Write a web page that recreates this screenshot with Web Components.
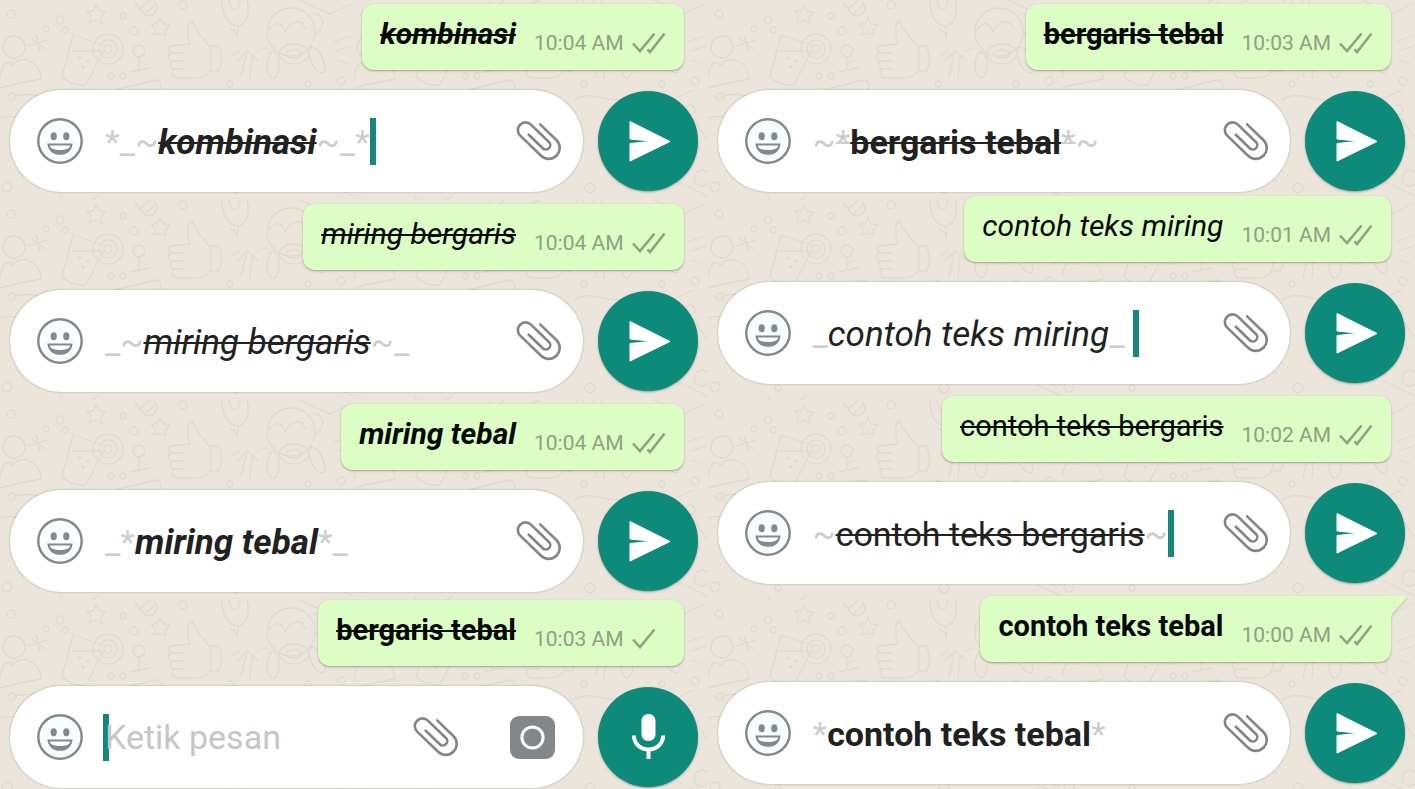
<!DOCTYPE html>
<html lang="id">
<head>
  <meta charset="utf-8">
  <meta name="viewport" content="width=device-width, initial-scale=1">
  <title>Format teks</title>
  <style>
    body {
      margin: 0;
      min-height: 100vh;
      background: #ece5db;
      font-family: Roboto, "Liberation Sans", sans-serif;
    }
  </style>
</head>
<body>
  <chat-board>
    <chat-column>
      <chat-step>
        <chat-bubble text="*_~kombinasi~_*" time="10:04 AM" status="delivered"></chat-bubble>
        <chat-composer value="*_~kombinasi~_*" caret></chat-composer>
      </chat-step>
      <chat-step>
        <chat-bubble text="_~miring bergaris~_" time="10:04 AM" status="delivered"></chat-bubble>
        <chat-composer value="_~miring bergaris~_"></chat-composer>
      </chat-step>
      <chat-step>
        <chat-bubble text="_*miring tebal*_" time="10:04 AM" status="delivered"></chat-bubble>
        <chat-composer value="_*miring tebal*_"></chat-composer>
      </chat-step>
      <chat-step gap="small">
        <chat-bubble text="~*bergaris tebal*~" time="10:03 AM" status="sent"></chat-bubble>
        <chat-composer placeholder="Ketik pesan"></chat-composer>
      </chat-step>
    </chat-column>
    <chat-column>
      <chat-step>
        <chat-bubble text="~*bergaris tebal*~" time="10:03 AM" status="delivered"></chat-bubble>
        <chat-composer value="~*bergaris tebal*~"></chat-composer>
      </chat-step>
      <chat-step gap="tiny">
        <chat-bubble text="_contoh teks miring_" time="10:01 AM" status="delivered"></chat-bubble>
        <chat-composer value="_contoh teks miring_ " caret></chat-composer>
      </chat-step>
      <chat-step>
        <chat-bubble text="~contoh teks bergaris~" time="10:02 AM" status="delivered"></chat-bubble>
        <chat-composer value="~contoh teks bergaris~" caret></chat-composer>
      </chat-step>
      <chat-step>
        <chat-bubble text="*contoh teks tebal*" time="10:00 AM" status="delivered" tail></chat-bubble>
        <chat-composer value="*contoh teks tebal*"></chat-composer>
      </chat-step>
    </chat-column>
  </chat-board>

  <script>
    const ICONS = {
      smile: `
        <svg width="46" height="46" viewBox="-23 -23 46 46" aria-hidden="true">
          <circle r="21.7" fill="#f8fdfe" stroke="#82898c" stroke-width="2.4"/>
          <ellipse cx="-6.3" cy="-4.7" rx="3.1" ry="4" fill="#82898c"/>
          <ellipse cx="6.3" cy="-4.7" rx="3.1" ry="4" fill="#82898c"/>
          <path d="M-12.6 2.4H12.6C12.2 9.6 6.6 13.8 0 13.8S-12.2 9.6-12.6 2.4Z" fill="#82898c"/>
          <path d="M-10.2 4.4H10.2C9.6 8 5 8.9 0 8.9S-9.6 8-10.2 4.4Z" fill="#fff"/>
        </svg>`,
      clip: `
        <svg width="46" height="42" viewBox="0 0 46 42" aria-hidden="true">
          <path transform="translate(23 21) rotate(44)" fill="none" stroke="#82868a" stroke-width="2.6" stroke-linecap="round"
            d="M-10 -13.5H12.5A11 11 0 0 1 12.5 8.5H-16.5A7.7 7.7 0 0 1 -16.5 -6.9H8.5A4.4 4.4 0 0 1 8.5 1.9H-11"/>
        </svg>`,
      camera: `
        <svg width="45" height="43" viewBox="0 0 45 43" aria-hidden="true">
          <rect width="45" height="43" rx="9" fill="#82878b"/>
          <circle cx="22.5" cy="21.5" r="10.6" fill="none" stroke="#fff" stroke-width="3"/>
        </svg>`,
      send: `
        <svg width="48" height="48" viewBox="0 0 48 48" aria-hidden="true">
          <path fill="#fff" stroke="#fff" stroke-linejoin="round" d="M6 4.5L46 24.5L6 44V26.5L28 24.3L6 22Z"/>
        </svg>`,
      mic: `
        <svg width="48" height="48" viewBox="0 0 48 48" aria-hidden="true">
          <rect x="17.5" y="1" width="14" height="27" rx="6.5" fill="#fff"/>
          <path d="M9.8 22.5C10.5 41 38.5 41 39.2 22.5M24.5 36V46" fill="none" stroke="#fff" stroke-width="4"/>
        </svg>`,
      delivered: `
        <svg width="34" height="22" viewBox="0 0 34 22" role="img" aria-label="Terkirim">
          <path d="M1 11.5L8 19L22.5 1.5M15.5 17.5L18 20L32.5 1.5" fill="none" stroke="#8da281" stroke-width="2.5"/>
        </svg>`,
      sent: `
        <svg width="34" height="22" viewBox="0 0 34 22" role="img" aria-label="Dikirim">
          <path d="M1 11.5L8 19L22.5 1.5" fill="none" stroke="#8da281" stroke-width="2.5"/>
        </svg>`,
    };

    const STYLES = { '*': 'bold', '_': 'italic', '~': 'strike' };

    // The italic face runs narrower than the upright one, so each host sets a larger --italic-size.
    const FORMAT_CSS = `
      .bold { font-weight: 700; }
      .italic { font-style: italic; font-size: var(--italic-size); }
      .strike { text-decoration: line-through; text-decoration-thickness: 2px; }
      .mark { color: #cdcdcd; }
    `;

    // Turns "*_text_*" into spans. Markers are kept only while the text is being edited.
    function format(source, keepMarks) {
      const value = source.trimEnd();
      const active = [];
      let open = '';
      let close = '';
      let body = value;

      while (STYLES[body[0]] && body.endsWith(body[0])) {
        const cls = active.includes('strike') ? 'mark strike' : 'mark';
        const mark = `<span class="${cls}">${body[0]}</span>`;
        open += mark;
        close = mark + close;
        active.push(STYLES[body[0]]);
        body = body.slice(1, -1);
      }

      const text = `<span class="${active.join(' ')}">${body}</span>`;
      return keepMarks ? open + text + close + source.slice(value.length) : text;
    }

    class ChatBoard extends HTMLElement {
      constructor() {
        super();
        this.attachShadow({ mode: 'open' }).innerHTML = `
          <style>
            :host {
              display: grid;
              grid-template-columns: 1fr 1fr;
              position: relative;
              isolation: isolate;
              min-height: 100vh;
              overflow: hidden;
            }
            .wallpaper {
              position: absolute;
              inset: 0;
              width: 100%;
              height: 100%;
              z-index: -1;
            }
            @media (max-width: 900px) {
              :host { grid-template-columns: 1fr; }
            }
          </style>
          <svg class="wallpaper" aria-hidden="true">
            <defs>
              <pattern id="doodles" width="354" height="200" patternUnits="userSpaceOnUse">
                <g fill="none" stroke="#e1dacf" stroke-width="1.3" stroke-linecap="round" stroke-linejoin="round">
                  <circle cx="14" cy="47" r="11"/>
                  <path d="M0 78C2 62 8 60 13 65C20 54 40 60 41 79C28 82 12 84 0 88"/>
                  <path d="M73 35L105 46M73 51H101M73 35L62 77C70 84 78 86 86 85L103 52"/>
                  <circle cx="108" cy="49" r="15"/><circle cx="108" cy="49" r="9"/><circle cx="108" cy="49" r="4"/>
                  <circle cx="80" cy="58" r="1"/><circle cx="88" cy="61" r="1"/><circle cx="83" cy="67" r="1"/>
                  <path d="M96 5L99 11L106 12L101 17L102 24L96 20L89 23L91 16L87 11L93 11Z"/>
                  <path d="M160 18L163 24L170 25L165 30L166 36L160 33L153 35L155 29L151 24L157 24Z"/>
                  <path d="M135 2L143 13C150 21 162 10 155 2M141 8L150 0M146 13L156 4"/>
                  <path d="M28 46L48 40M36 35L40 51M31 38L45 49"/>
                  <circle cx="11" cy="14" r="4"/><circle cx="60" cy="20" r="4"/><circle cx="46" cy="29" r="3"/>
                  <circle cx="65" cy="30" r="3"/><circle cx="123" cy="16" r="3"/><circle cx="134" cy="31" r="4"/>
                  <circle cx="183" cy="5" r="4"/><circle cx="111" cy="76" r="3"/><circle cx="123" cy="76" r="3"/>
                  <circle cx="139" cy="51" r="6"/><path d="M139 57V70M130 72L150 68M139 63L146 61"/>
                  <path d="M172 46C168 46 168 52 172 53M172 53C167 54 168 60 173 61M173 61C169 62 169 69 174 69M174 69C171 71 172 77 177 78H195C207 78 210 72 211 66V48C205 41 196 32 192 21C186 22 187 32 190 44L172 46M172 53H184M173 61H185M174 69H185"/>
                  <path d="M211 46H219C222 55 222 64 219 71H211"/>
                  <path d="M222 0C222 15 228 26 238 26C248 24 250 12 247 0M229 0C230 12 239 13 240 0M230 28L238 34M238 26V38"/>
                  <path d="M241 77L246 55M250 78L252 56M237 61L247 51L258 60M232 55L240 51M257 51L266 48"/>
                  <circle cx="291" cy="32" r="24"/><path d="M268 31C275 20 282 22 285 32C290 20 302 18 306 29M313 14C324 12 326 29 316 34"/>
                  <ellipse cx="294" cy="54" rx="15" ry="10"/><ellipse cx="294" cy="54" rx="8" ry="4"/>
                  <ellipse cx="273" cy="65" rx="6" ry="13"/><ellipse cx="317" cy="60" rx="6" ry="14" transform="rotate(-25 317 60)"/>
                  <path d="M334 42L350 36M336 51L352 46M338 60L348 64"/>
                  <path d="M115 90L155 80C162 80 162 88 158 92M12 98C30 86 60 108 80 98M0 118C20 112 28 124 34 132"/>
                  <circle cx="230" cy="84" r="3"/><circle cx="341" cy="81" r="4"/><circle cx="308" cy="84" r="3"/>
                  <circle cx="12" cy="97" r="4"/><circle cx="7" cy="187" r="5"/><circle cx="70" cy="188" r="3"/>
                  <path d="M220 100C240 86 260 112 284 92M300 108L340 90M320 180L353 196M60 196C66 210 84 208 98 196M306 120C330 116 340 130 346 150"/>
                  <circle cx="236" cy="188" r="5"/><circle cx="348" cy="178" r="8"/><circle cx="336" cy="110" r="5"/>
                  <path d="M340 118L352 138M300 0L330 14L350 4"/>
                </g>
              </pattern>
            </defs>
            <rect width="100%" height="100%" fill="url(#doodles)"/>
          </svg>
          <slot></slot>
        `;
      }
    }

    class ChatColumn extends HTMLElement {
      constructor() {
        super();
        this.attachShadow({ mode: 'open' }).innerHTML = `
          <style>
            :host {
              display: flex;
              flex-direction: column;
              min-width: 0;
              padding: 4px 10px 0;
            }
          </style>
          <slot></slot>
        `;
      }
    }

    class ChatStep extends HTMLElement {
      constructor() {
        super();
        this.attachShadow({ mode: 'open' }).innerHTML = `
          <style>
            :host {
              display: flex;
              flex-direction: column;
              gap: 20px;
              margin-top: 12px;
            }
            :host([gap="small"]) { margin-top: 8px; }
            :host([gap="tiny"]) { margin-top: 4px; }
            :host(:first-child) { margin-top: 0; }
          </style>
          <slot></slot>
        `;
      }
    }

    class ChatBubble extends HTMLElement {
      constructor() {
        super();
        this.attachShadow({ mode: 'open' });
      }

      connectedCallback() {
        const tail = this.hasAttribute('tail')
          ? `<svg class="tail" width="17" height="24" viewBox="0 0 17 24" aria-hidden="true">
               <path d="M0 0H13.5C15.5 0 15.5 1.5 14.5 3L3 16C0.5 19 0 20 0 24Z" fill="#dcfdc4"/>
             </svg>`
          : '';

        this.shadowRoot.innerHTML = `
          <style>
            :host {
              --italic-size: 30px;
              display: flex;
              align-self: flex-end;
              position: relative;
              gap: 18px;
              margin-right: 14px;
              padding: 13px 18px 15px 18px;
              border-radius: 12px;
              background: #dcfdc4;
              box-shadow: 0 1px 2px rgba(70, 80, 50, 0.45);
            }
            :host([tail]) { border-top-right-radius: 0; }
            .text {
              height: 38px;
              font-size: 29px;
              line-height: 34px;
              color: #050805;
              white-space: nowrap;
            }
            .meta {
              display: flex;
              align-items: center;
              align-self: flex-end;
              gap: 8px;
              font-size: 21px;
              line-height: 24px;
              color: #8da281;
              white-space: nowrap;
            }
            .tail {
              position: absolute;
              top: 0;
              left: 100%;
              filter: drop-shadow(0 1px 1px rgba(70, 80, 50, 0.3));
              clip-path: inset(0 -2px -2px 0);
            }
            svg { display: block; }
            ${FORMAT_CSS}
          </style>
          <div class="text">${format(this.getAttribute('text'), false)}</div>
          <div class="meta"><time>${this.getAttribute('time')}</time>${ICONS[this.getAttribute('status')]}</div>
          ${tail}
        `;
      }
    }

    class ChatComposer extends HTMLElement {
      constructor() {
        super();
        this.attachShadow({ mode: 'open' });
      }

      renderField() {
        if (!this.hasAttribute('value')) {
          return `
            <div class="field empty">
              <span class="caret"></span>
              <input type="text" aria-label="Pesan" placeholder="${this.getAttribute('placeholder')}">
            </div>`;
        }
        const caret = this.hasAttribute('caret') ? '<span class="caret"></span>' : '';
        return `
          <div class="field">
            <div class="editor" role="textbox" contenteditable="true" spellcheck="false" aria-label="Pesan">${format(this.getAttribute('value'), true)}</div>
            ${caret}
          </div>`;
      }

      connectedCallback() {
        const empty = !this.hasAttribute('value');

        this.shadowRoot.innerHTML = `
          <style>
            :host {
              --italic-size: 35px;
              display: flex;
              align-items: center;
              gap: 15px;
            }
            .pill {
              display: flex;
              align-items: center;
              flex: 1;
              min-width: 0;
              box-sizing: border-box;
              height: 102px;
              padding: 0 22px 0 27px;
              border-radius: 51px;
              background: #fff;
              box-shadow: 0 0 2px rgba(90, 80, 60, 0.5);
            }
            .pill.empty { padding-right: 28px; }
            button {
              display: grid;
              place-items: center;
              flex: none;
              margin: 0;
              padding: 0;
              border: 0;
              background: none;
              cursor: pointer;
            }
            .action {
              width: 100px;
              height: 100px;
              border-radius: 50%;
              background: #0e8a7a;
              box-shadow: 0 1px 2px rgba(60, 90, 80, 0.5);
            }
            .camera { margin-left: 52px; }
            .field {
              display: flex;
              align-items: center;
              flex: 1;
              min-width: 0;
              position: relative;
              margin-left: 22px;
              font-size: 34px;
              line-height: 40px;
              color: #212121;
            }
            .editor {
              padding-top: 2px;
              outline: none;
              white-space: pre;
            }
            input {
              position: relative;
              width: 100%;
              min-width: 0;
              margin: 0;
              padding: 0;
              border: 0;
              outline: none;
              background: none;
              font: inherit;
              color: inherit;
            }
            input::placeholder { color: #c6c6c6; opacity: 1; }
            .caret {
              flex: none;
              width: 6px;
              height: 47px;
              background: #16877a;
            }
            .field.empty .caret {
              position: absolute;
              left: -2px;
            }
            svg { display: block; }
            ${FORMAT_CSS}
          </style>
          <div class="pill ${empty ? 'empty' : ''}">
            <button type="button" aria-label="Emoji">${ICONS.smile}</button>
            ${this.renderField()}
            <button type="button" aria-label="Lampirkan">${ICONS.clip}</button>
            ${empty ? `<button type="button" class="camera" aria-label="Kamera">${ICONS.camera}</button>` : ''}
          </div>
          <button type="button" class="action" aria-label="${empty ? 'Rekam suara' : 'Kirim'}">${empty ? ICONS.mic : ICONS.send}</button>
        `;
      }
    }

    customElements.define('chat-board', ChatBoard);
    customElements.define('chat-column', ChatColumn);
    customElements.define('chat-step', ChatStep);
    customElements.define('chat-bubble', ChatBubble);
    customElements.define('chat-composer', ChatComposer);
  </script>
</body>
</html>
